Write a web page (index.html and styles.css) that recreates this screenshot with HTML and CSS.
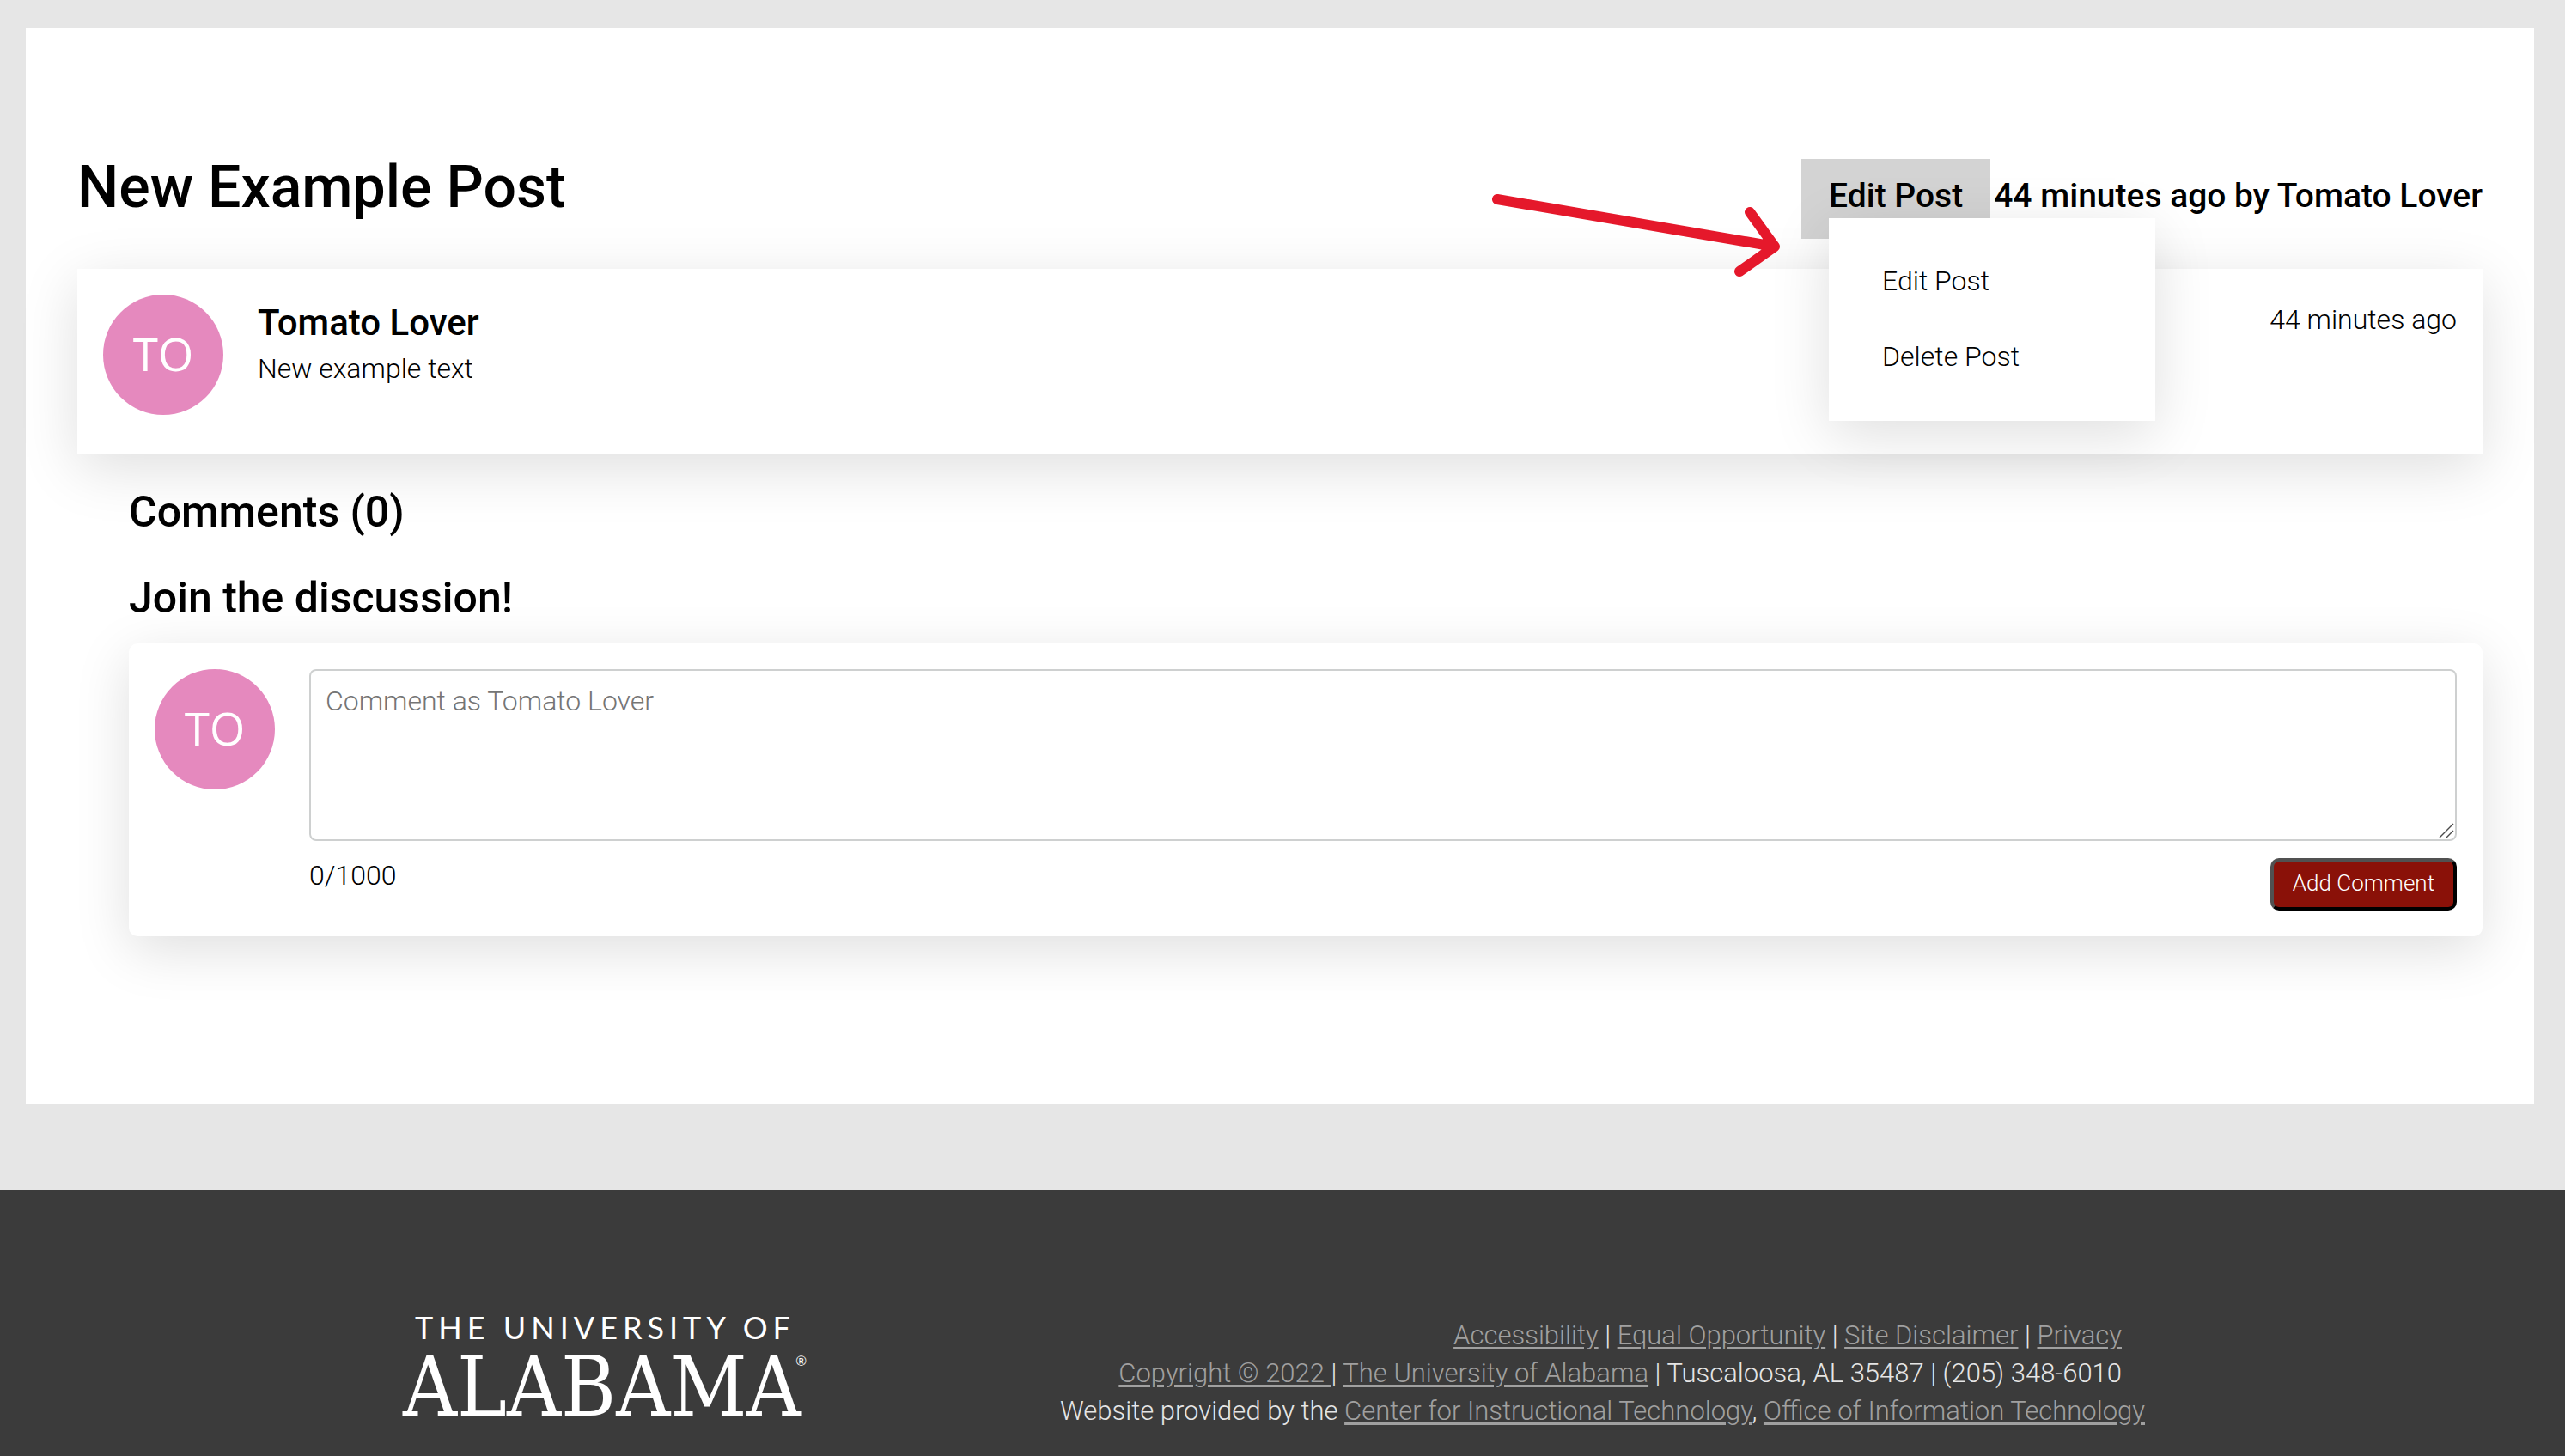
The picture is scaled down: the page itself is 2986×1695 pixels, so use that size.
FILE: index.html
```html
<!DOCTYPE html>
<html lang="en">
<head>
  <meta charset="utf-8">
  <meta name="viewport" content="width=device-width, initial-scale=1">
  <title>New Example Post</title>
  <link rel="stylesheet" href="styles.css">
</head>
<body>
  <main class="panel">
    <header class="post-header">
      <h1 class="post-title">New Example Post</h1>
      <div class="post-meta">
        <div class="dropdown">
          <button class="dropdown-toggle" type="button" aria-expanded="true" aria-controls="post-menu">Edit Post</button>
          <nav class="dropdown-menu" id="post-menu">
            <a class="dropdown-item" href="#edit">Edit Post</a>
            <a class="dropdown-item" href="#delete">Delete Post</a>
          </nav>
          <svg class="arrow" viewBox="0 0 340 100" aria-hidden="true">
            <path d="M6 7L329 62M300 22L329 62L288 91" class="arrow-line"/>
          </svg>
        </div>
        <span class="post-byline">44 minutes ago by Tomato Lover</span>
      </div>
    </header>

    <article class="card post">
      <div class="avatar">TO</div>
      <div class="post-body">
        <h2 class="post-author">Tomato Lover</h2>
        <p class="post-text">New example text</p>
      </div>
      <time class="post-time">44 minutes ago</time>
    </article>

    <section class="comments">
      <h2 class="section-title">Comments (0)</h2>
      <h2 class="section-title">Join the discussion!</h2>
      <form class="card comment-form">
        <div class="avatar">TO</div>
        <div class="comment-fields">
          <div class="comment-box">
            <textarea class="comment-input" aria-label="Comment" placeholder="Comment as Tomato Lover" maxlength="1000"></textarea>
            <svg class="grip" viewBox="0 0 18 18" aria-hidden="true">
              <path d="M1 17L17 1M9 17L17 9" class="grip-line"/>
            </svg>
          </div>
          <div class="comment-actions">
            <span class="comment-count">0/1000</span>
            <button class="submit" type="button">Add Comment</button>
          </div>
        </div>
      </form>
    </section>
  </main>

  <footer class="site-footer">
    <div class="footer-inner">
      <div class="logo">
        <div class="logo-top">THE UNIVERSITY OF</div>
        <div class="logo-name">ALABAMA<span class="logo-mark">®</span></div>
      </div>
      <div class="footer-text">
        <p class="footer-links"><a href="#accessibility">Accessibility</a> | <a href="#equal">Equal Opportunity</a> | <a href="#disclaimer">Site Disclaimer</a> | <a href="#privacy">Privacy</a><br>
        <a href="#copyright">Copyright © 2022 </a>| <a href="#ua">The University of Alabama</a> | Tuscaloosa, AL 35487 | (205) 348-6010</p>
        <p>Website provided by the <a href="#cit">Center for Instructional Technology</a>, <a href="#oit">Office of Information Technology</a></p>
      </div>
    </div>
  </footer>
</body>
</html>
```
FILE: styles.css
```css
* {
  box-sizing: border-box;
}

body {
  margin: 0;
  min-height: 100vh;
  display: flex;
  flex-direction: column;
  background: #e6e6e6;
  color: #000;
  font-family: Roboto, "Liberation Sans", sans-serif;
  font-size: 32px;
  font-weight: 350;
  line-height: 40px;
}

h1,
h2,
p {
  margin: 0;
}

h1,
h2 {
  font-weight: 500;
}

.panel {
  margin: 33px 36px 100px 30px;
  padding: 152px 60px 195px;
  background: #fff;
}

.post-header {
  display: flex;
  justify-content: space-between;
  align-items: baseline;
  margin-bottom: 35px;
}

.post-title {
  font-size: 68px;
  line-height: 60px;
}

.post-meta {
  display: flex;
  align-items: baseline;
  gap: 4px;
  font-size: 39px;
  font-weight: 500;
  line-height: 46px;
}

.dropdown {
  position: relative;
}

.dropdown-toggle {
  display: block;
  padding: 20px 32px 27px;
  border: 0;
  background: #d3d3d3;
  color: inherit;
  font: inherit;
}

.dropdown-menu {
  position: absolute;
  z-index: 2;
  top: 69px;
  left: 32px;
  width: 380px;
  padding: 29px 0 31px;
  background: #fff;
  box-shadow: 0 16px 64px rgba(0, 0, 0, 0.13);
  font-size: 32px;
  font-weight: 350;
}

.dropdown-item {
  display: block;
  padding: 22px 62px;
  color: #000;
  line-height: 44px;
  text-decoration: none;
}

.arrow {
  position: absolute;
  z-index: 2;
  top: 40px;
  left: -360px;
  width: 340px;
  height: 100px;
}

.arrow-line {
  fill: none;
  stroke: #e5182b;
  stroke-width: 12;
  stroke-linecap: round;
  stroke-linejoin: round;
}

.card {
  display: flex;
  gap: 40px;
  padding: 30px;
  background: #fff;
  box-shadow: 0 16px 64px rgba(0, 0, 0, 0.13);
}

.post {
  padding-bottom: 46px;
}

.avatar {
  flex: none;
  width: 140px;
  height: 140px;
  border-radius: 50%;
  background: #e589be;
  color: #fff;
  font-family: "Open Sans", sans-serif;
  font-size: 53px;
  font-weight: 400;
  line-height: 138px;
  text-align: center;
}

.post-body {
  flex: 1;
}

.post-author {
  font-size: 42px;
  line-height: 66px;
}

.post-time {
  line-height: 58px;
}

.comments {
  padding-left: 60px;
  margin-top: 37px;
}

.section-title {
  margin-bottom: 40px;
  font-size: 50px;
  line-height: 60px;
}

.section-title + .section-title {
  margin-bottom: 23px;
}

.comment-form {
  border-radius: 10px;
}

.comment-fields {
  flex: 1;
}

.comment-box {
  position: relative;
}

.comment-input {
  display: block;
  width: 100%;
  height: 200px;
  padding: 17px;
  border: 2px solid #ced0d0;
  border-radius: 8px;
  background: #fff;
  font: inherit;
  line-height: 36px;
}

.comment-input::placeholder {
  color: #757575;
}

.comment-input::-webkit-resizer {
  background: transparent;
}

.grip {
  position: absolute;
  right: 3px;
  bottom: 3px;
  width: 18px;
  height: 18px;
  pointer-events: none;
}

.grip-line {
  stroke: #4a4a4a;
  stroke-width: 1.4;
}

.comment-actions {
  display: flex;
  justify-content: space-between;
  align-items: flex-start;
  margin-top: 20px;
}

.submit {
  padding: 7px 22px 10px;
  border: 4px solid;
  border-color: #515151 #000 #000 #515151;
  border-radius: 10px;
  background: #8a1108;
  color: #fff;
  font: inherit;
  font-size: 26px;
  line-height: 36px;
}

.site-footer {
  flex: 1;
  padding: 140px 20px 0 0;
  background: #3b3b3b;
  color: #e5e5e5;
}

.footer-inner {
  display: flex;
  justify-content: space-between;
  max-width: 2028px;
  margin: 0 auto;
}

.logo {
  color: #fff;
  font-weight: 400;
}

.logo-top {
  padding-left: 14px;
  font-family: Lato, sans-serif;
  font-size: 36px;
  letter-spacing: 6px;
}

.logo-name {
  position: relative;
  font-family: "DejaVu Serif Condensed", "Liberation Serif", serif;
  font-size: 97px;
  line-height: 100px;
}

.logo-mark {
  position: absolute;
  top: 10px;
  right: -6px;
  font-family: "Liberation Sans", sans-serif;
  font-size: 16px;
  line-height: 20px;
}

.footer-text {
  padding-top: 8px;
  font-size: 31px;
  font-weight: 300;
  line-height: 44px;
  text-align: right;
}

.footer-links {
  padding-right: 27px;
}

.footer-text a {
  color: #a0a0a0;
  text-decoration-thickness: 3px;
  text-underline-offset: 3px;
}
```
